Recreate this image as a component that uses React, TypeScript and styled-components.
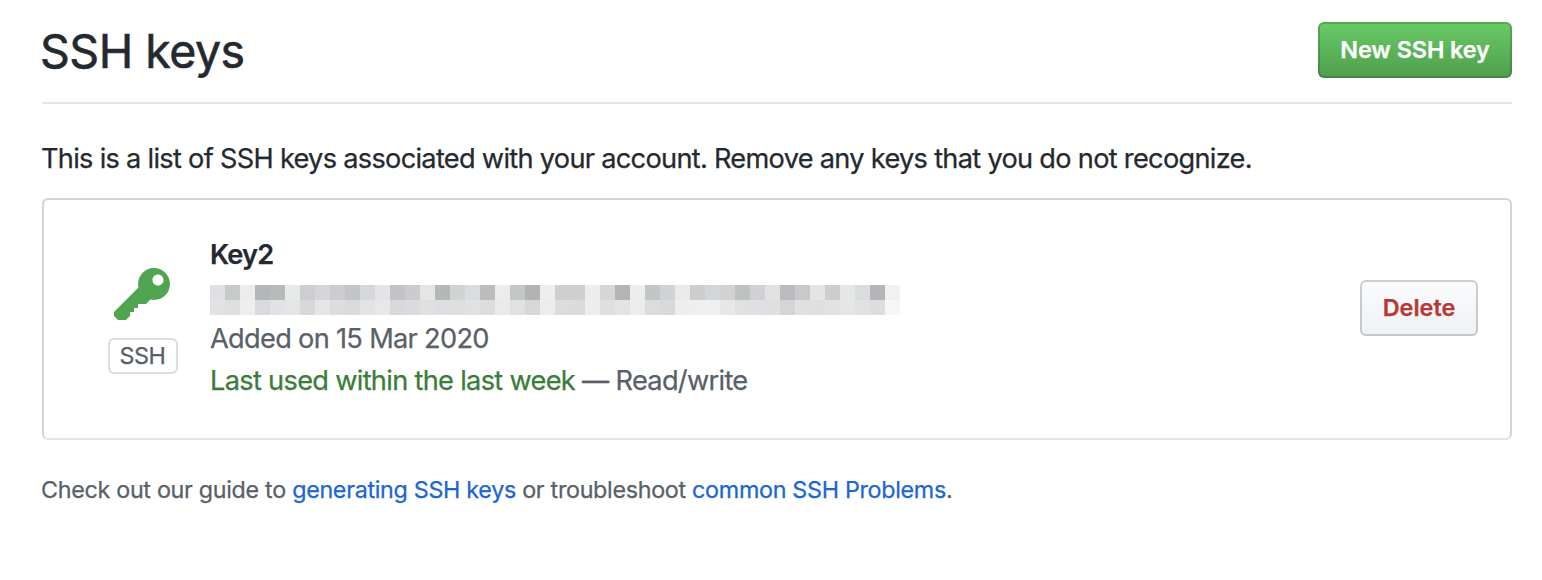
import React from 'react';
import styled, { createGlobalStyle } from 'styled-components';

const GlobalStyle = createGlobalStyle`
  * { box-sizing: border-box; }
  body {
    margin: 0;
    background: #fff;
    color: #24292e;
    font-family: Inter, "Liberation Sans", sans-serif;
    font-size: 27.2px;
    line-height: 42px;
    white-space: nowrap;
    -webkit-text-stroke-width: 0.25px;
  }
`;

const Page = styled.main`
  width: 1542px;
  height: 580px;
  padding: 22px 30px 0 42px;
`;

const Header = styled.header`
  display: flex;
  justify-content: space-between;
  height: 82px;
  border-bottom: 2px solid #e1e4e8;
`;

const Title = styled.h2`
  margin: -7px 0 0 -2px;
  font-size: 46.5px;
  font-weight: 400;
  line-height: 72px;
  letter-spacing: -0.5px;
  -webkit-text-stroke-width: 0.6px;
`;

const Button = styled.button<{ $primary?: boolean }>`
  width: ${(p) => (p.$primary ? 194 : 118)}px;
  height: 56px;
  padding: 0;
  border: 2px solid rgba(27, 31, 35, 0.2);
  border-radius: 6px;
  background: ${(p) =>
    p.$primary
      ? 'linear-gradient(180deg, #69cb66, #51a14f 90%) -2px -2px / 110% 110%'
      : 'linear-gradient(180deg, #fafbfc, #eff3f6 90%) -2px -2px / 110% 110%'};
  color: ${(p) => (p.$primary ? '#fff' : '#b93635')};
  font: 600 23.4px/50px Inter, "Liberation Sans", sans-serif;
  letter-spacing: ${(p) => (p.$primary ? '-0.1px' : '0')};
`;

const Intro = styled.p`
  margin: 34px 0 18px -1px;
  letter-spacing: -0.71px;
`;

const KeyCard = styled.section`
  display: flex;
  align-items: center;
  height: 242px;
  padding: 0 32px 0 64px;
  border: 2px solid #d1d5da;
  border-bottom-color: #e1e4e8;
  border-radius: 6px;
`;

const KeyType = styled.div`
  display: flex;
  flex-direction: column;
  align-items: center;
  gap: 10px;
  width: 70px;
  margin-right: 32px;
`;

const KeyIcon = styled.svg`
  width: 56px;
  height: 64px;
  margin-right: 2px;
  fill: #52a550;
  stroke: none;
`;

const TypeLabel = styled.span`
  width: 70px;
  height: 36px;
  padding-right: 1px;
  border: 2px solid #dcdcdc;
  border-radius: 6px;
  color: #586069;
  font-size: 23.3px;
  line-height: 32px;
  letter-spacing: -0.4px;
  text-align: center;
`;

const Details = styled.div`
  flex: 1;
  margin-bottom: 3px;
  color: #586069;
`;

const KeyName = styled.div`
  color: #24292e;
  font-weight: 600;
  line-height: 44px;
  letter-spacing: -0.8px;
`;

const Fingerprint = styled.div`
  display: grid;
  grid-template-columns: repeat(46, 15px);
  grid-auto-rows: 15px;
  margin: 8px 0 3px;
`;

const Cell = styled.i``;

const Meta = styled.div`
  letter-spacing: -0.69px;
`;

const Recent = styled.span`
  color: #397d38;
`;

const Footer = styled.p`
  margin: 32px 0 0 -1px;
  color: #586069;
  font-size: 23.3px;
  line-height: 36px;
  letter-spacing: -0.3px;
`;

const Link = styled.a`
  color: #1b66d3;
`;

const DeleteButton = styled(Button)`
  margin-bottom: 22px;
`;

const cells = (
  'dee0e3 c8c9cb ececec b5b6b8 b9babc e7eae8 cdced0 d5d6d9 cccdcf c4c5c7 d6d7da e2e4e7 c2c3c5 cccbcd e4e6e4 b6b7b9 ' +
  'd2d3d5 dadcdf bbbcbe eaedec c5c6c8 b2b3b5 eeeeee cfcecf cdcfd0 ededed d6d6d6 b3b4b6 eceeed c4c5c7 d1d2d4 eaeaea ' +
  'cccdcf d4d5d8 d1d2d4 c0c1c3 d0d1d3 e1e1e1 babbbd c8c9cb e4e4e4 cdcdd0 e4e7e5 dadcdf b4b5b7 eff2f1 ' +
  'e2e2e2 dee0df eeeeee d9dadd e1e2e5 e4e6e4 d8d8d9 e4e5e4 dcdddc d9dadd e2e4e3 e7e8e7 d8d9db dadbde e0e0e0 dddee1 ' +
  'dddfde e0e2e1 dedddd eaeaea e0e2e1 d8d7d7 ececec dbdddc dadbdd ededed dedfe2 e2e4e3 ececec dbdddc d8d9db eeeeee ' +
  'efefef eef0ef e7e7e7 e0e2e1 dfe0e3 dfdfdf d4d5d7 e0e0e0 dedfe2 e2e2e2 e4e6e5 e0e2e1 dcdddc f6f6f6'
).split(' ');

export default function App() {
  return (
    <Page>
      <GlobalStyle />
      <Header>
        <Title>SSH keys</Title>
        <Button $primary>New SSH key</Button>
      </Header>
      <Intro>
        This is a list of SSH keys associated with your account. Remove any keys that you do not recognize.
      </Intro>
      <KeyCard>
        <KeyType>
          <KeyIcon viewBox="0 0 14 16">
            <path
              fillRule="evenodd"
              d="M12.83 2.17C12.08 1.42 11.14 1.03 10 1c-1.13.03-2.08.42-2.83 1.17S6.04 3.86 6.01 5c0 .3.03.59.09.89L0 12v1l1 1h2l1-1v-1h1v-1h1v-1h2l1.09-1.11c.3.08.59.11.91.11 1.14-.03 2.08-.42 2.83-1.17S13.97 6.14 14 5c-.03-1.14-.42-2.08-1.17-2.83zM11 5.38c-.77 0-1.38-.61-1.38-1.38 0-.77.61-1.38 1.38-1.38.77 0 1.38.61 1.38 1.38 0 .77-.61 1.38-1.38 1.38z"
            />
          </KeyIcon>
          <TypeLabel>SSH</TypeLabel>
        </KeyType>
        <Details>
          <KeyName>Key2</KeyName>
          <Fingerprint>
            {cells.map((color, i) => (
              <Cell key={i} style={{ background: `#${color}` }} />
            ))}
          </Fingerprint>
          <Meta>Added on 15 Mar 2020</Meta>
          <Meta>
            <Recent>Last used within the last week</Recent> — Read/write
          </Meta>
        </Details>
        <DeleteButton>Delete</DeleteButton>
      </KeyCard>
      <Footer>
        Check out our guide to <Link>generating SSH keys</Link> or troubleshoot <Link>common SSH Problems</Link>.
      </Footer>
    </Page>
  );
}
